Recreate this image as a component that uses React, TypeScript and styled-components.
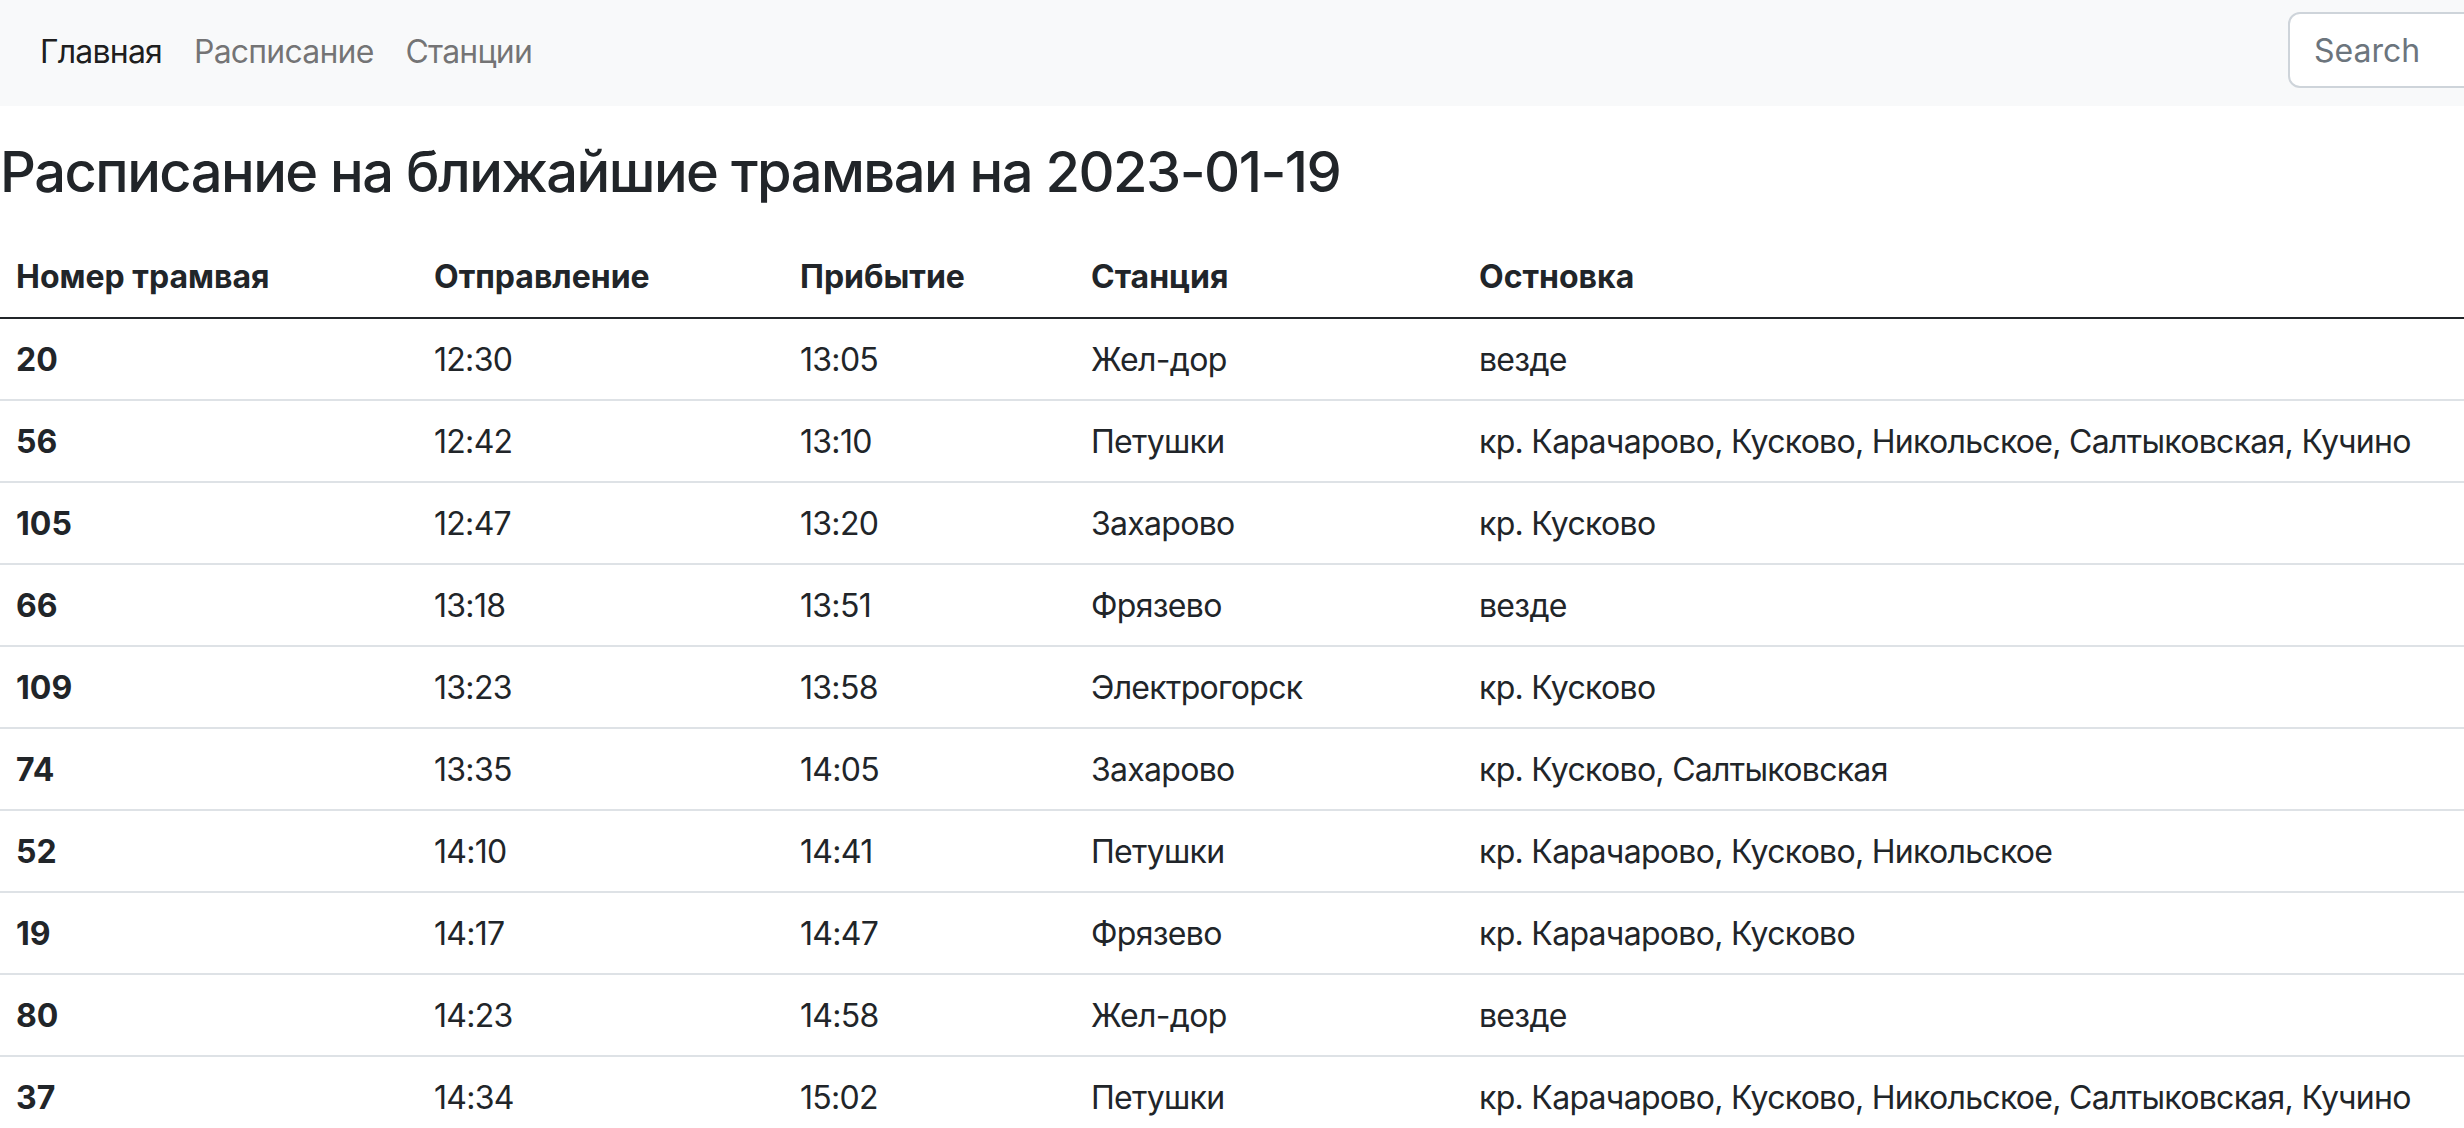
import React from "react";
import styled, { createGlobalStyle } from "styled-components";

const GlobalStyle = createGlobalStyle`
  html, body {
    margin: 0;
    padding: 0;
    background: #ffffff;
    color: #212529;
    font-family: Inter, "Noto Sans", "Liberation Sans", sans-serif;
    overflow-x: hidden;
  }
  * { box-sizing: border-box; }
`;

const Navbar = styled.nav`
  display: flex;
  align-items: center;
  height: 106px;
  padding: 0 24px;
  background: #f8f9fa;
  overflow: hidden;
`;

const NavList = styled.ul`
  display: flex;
  list-style: none;
  margin: 0;
  padding: 0;
`;

const NavLink = styled.a<{ $active?: boolean }>`
  display: block;
  padding: 15px 16px 17px;
  font-size: 32px;
  line-height: 48px;
  letter-spacing: -0.025em;
  text-decoration: none;
  color: ${(p) => (p.$active ? "rgba(0,0,0,0.9)" : "rgba(0,0,0,0.55)")};
`;

const SearchForm = styled.form`
  margin-left: auto;
  margin-right: -24px;
  flex: 0 0 176px;
  overflow: hidden;
  align-self: flex-start;
  padding-top: 12px;
`;

const SearchInput = styled.input`
  width: 420px;
  height: 76px;
  padding: 0 24px;
  border: 2px solid #ced4da;
  border-radius: 12px;
  background: #ffffff;
  font-family: inherit;
  font-size: 32px;
  color: #212529;
  outline: none;
  &::placeholder {
    color: #6c757d;
  }
`;

const Title = styled.h1`
  margin: 33px 0 31px;
  font-size: 56px;
  line-height: 1.2;
  font-weight: 500;
  letter-spacing: -0.027em;
  color: #212529;
`;

const Table = styled.table`
  width: 100%;
  border-collapse: collapse;
  table-layout: fixed;
  font-size: 32px;
  line-height: 48px;
  color: #212529;
`;

const HeadCell = styled.th`
  padding: 16px;
  text-align: left;
  font-weight: 700;
  border-bottom: 2px solid #212529;
`;

const Cell = styled.td<{ $bold?: boolean }>`
  padding: 17px 16px 15px;
  text-align: left;
  white-space: nowrap;
  font-weight: ${(p) => (p.$bold ? 700 : 400)};
  letter-spacing: ${(p) => (p.$bold ? "0" : "-0.022em")};
  border-bottom: 2px solid #dee2e6;
`;

const columns = [
  { title: "Номер трамвая", width: 418 },
  { title: "Отправление", width: 366 },
  { title: "Прибытие", width: 291 },
  { title: "Станция", width: 388 },
  { title: "Остновка", width: undefined as number | undefined },
];

const rows: [string, string, string, string, string][] = [
  ["20", "12:30", "13:05", "Жел-дор", "везде"],
  ["56", "12:42", "13:10", "Петушки", "кр. Карачарово, Кусково, Никольское, Салтыковская, Кучино"],
  ["105", "12:47", "13:20", "Захарово", "кр. Кусково"],
  ["66", "13:18", "13:51", "Фрязево", "везде"],
  ["109", "13:23", "13:58", "Электрогорск", "кр. Кусково"],
  ["74", "13:35", "14:05", "Захарово", "кр. Кусково, Салтыковская"],
  ["52", "14:10", "14:41", "Петушки", "кр. Карачарово, Кусково, Никольское"],
  ["19", "14:17", "14:47", "Фрязево", "кр. Карачарово, Кусково"],
  ["80", "14:23", "14:58", "Жел-дор", "везде"],
  ["37", "14:34", "15:02", "Петушки", "кр. Карачарово, Кусково, Никольское, Салтыковская, Кучино"],
];

export default function App() {
  return (
    <>
      <GlobalStyle />
      <Navbar>
        <NavList>
          <li><NavLink href="#" $active>Главная</NavLink></li>
          <li><NavLink href="#">Расписание</NavLink></li>
          <li><NavLink href="#">Станции</NavLink></li>
        </NavList>
        <SearchForm onSubmit={(e) => e.preventDefault()}>
          <SearchInput type="search" placeholder="Search" aria-label="Search" />
        </SearchForm>
      </Navbar>
      <main>
        <Title>Расписание на ближайшие трамваи на 2023-01-19</Title>
        <Table>
          <colgroup>
            {columns.map((c, i) => (
              <col key={i} style={c.width ? { width: c.width } : undefined} />
            ))}
          </colgroup>
          <thead>
            <tr>
              {columns.map((c) => (
                <HeadCell key={c.title} scope="col">{c.title}</HeadCell>
              ))}
            </tr>
          </thead>
          <tbody>
            {rows.map((r, i) => (
              <tr key={i}>
                {r.map((v, j) => (
                  <Cell key={j} $bold={j === 0}>{v}</Cell>
                ))}
              </tr>
            ))}
          </tbody>
        </Table>
      </main>
    </>
  );
}
